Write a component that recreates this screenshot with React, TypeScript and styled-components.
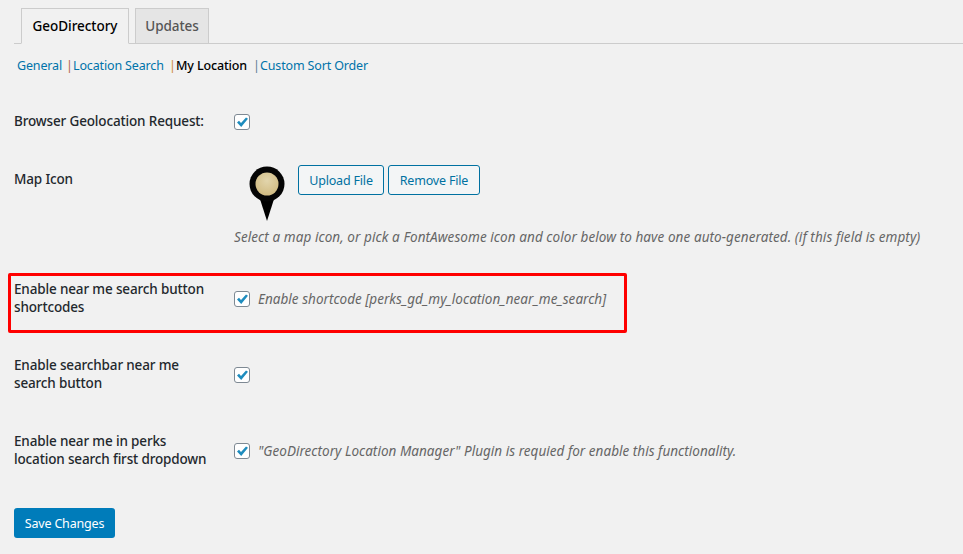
import styled, { createGlobalStyle } from 'styled-components';

const Global = createGlobalStyle`
  html, body {
    margin: 0;
    padding: 0;
    background: #f1f1f1;
  }
  body {
    font-family: "Noto Sans", "Open Sans", sans-serif;
    font-size: 13px;
    color: #23282d;
    overflow: hidden;
  }
`;

const Root = styled.div`
  width: 963px;
  height: 554px;
  overflow: hidden;
`;

const TabBar = styled.div`
  display: flex;
  gap: 6px;
  height: 35px;
  margin: 8px 0 0 14px;
  padding-left: 7px;
  border-bottom: 1px solid #ccc;
`;

const Tab = styled.div<{ $active?: boolean }>`
  box-sizing: border-box;
  height: ${(p) => (p.$active ? '36px' : '35px')};
  width: ${(p) => (p.$active ? '108px' : '74px')};
  display: flex;
  align-items: center;
  justify-content: center;
  border: 1px solid #ccc;
  border-bottom: ${(p) => (p.$active ? '1px solid #f1f1f1' : 'none')};
  background: ${(p) => (p.$active ? '#f1f1f1' : '#e5e5e5')};
  color: ${(p) => (p.$active ? '#000' : '#555')};
  font-size: 13.5px;
  font-weight: 500;
  letter-spacing: -0.05px;
`;

const SubNav = styled.div`
  display: flex;
  height: 18px;
  margin: 13px 0 0 17px;
  line-height: 18px;
  font-size: 12.5px;
  letter-spacing: -0.15px;
`;

const SubLink = styled.a<{ $current?: boolean; $width: number }>`
  width: ${(p) => p.$width}px;
  color: ${(p) => (p.$current ? '#000' : '#0073aa')};
  font-weight: ${(p) => (p.$current ? 500 : 400)};
  white-space: nowrap;
`;

const Sep = styled.span<{ $color: string }>`
  width: 7px;
  color: ${(p) => p.$color};
`;

const Form = styled.div`
  margin: 37px 0 0 14px;
`;

const Row = styled.div<{ $height: number }>`
  position: relative;
  display: grid;
  grid-template-columns: 220px 1fr;
  height: ${(p) => p.$height}px;
`;

const Label = styled.div<{ $top: number }>`
  padding-top: ${(p) => p.$top}px;
  width: 196px;
  font-weight: 500;
  font-size: 13.5px;
  line-height: 18px;
  letter-spacing: -0.15px;
  color: #23282d;
`;

const Field = styled.div<{ $top?: number }>`
  display: flex;
  align-items: center;
  gap: 8px;
  height: 16px;
  margin-top: ${(p) => p.$top ?? 0}px;
`;

const Box = styled.span`
  box-sizing: border-box;
  flex: none;
  width: 16px;
  height: 16px;
  display: flex;
  align-items: center;
  justify-content: center;
  border: 1px solid #7e8993;
  border-radius: 3px;
  background: #fff;
`;

const Hint = styled.span`
  font-style: italic;
  font-size: 13.5px;
  letter-spacing: 0.03px;
  color: #666;
  white-space: nowrap;
`;

const MapField = styled.div`
  display: flex;
  flex-direction: column;
`;

const UploadRow = styled.div`
  box-sizing: border-box;
  display: flex;
  gap: 4px;
  height: 61px;
  padding: 1px 0 0 15px;
`;

const PinWrap = styled.div`
  width: 45px;
  padding-top: 1px;
`;

const OutlineButton = styled.div<{ $width: number }>`
  box-sizing: border-box;
  width: ${(p) => p.$width}px;
  height: 30px;
  display: flex;
  align-items: center;
  justify-content: center;
  border: 1px solid #0071a1;
  border-radius: 3px;
  background: #f3f5f6;
  color: #0071a1;
  font-size: 12.5px;
  letter-spacing: -0.18px;
`;

const MapHint = styled(Hint)`
  margin-top: 3px;
  line-height: 18px;
  letter-spacing: 0.08px;
`;

const Highlight = styled.div`
  position: absolute;
  left: -6px;
  top: -1px;
  width: 619px;
  height: 60px;
  box-sizing: border-box;
  border: 3px solid #f00;
  border-radius: 2px;
  pointer-events: none;
`;

const SaveButton = styled.div`
  box-sizing: border-box;
  width: 101px;
  height: 30px;
  display: flex;
  align-items: center;
  justify-content: center;
  background: #007cba;
  border-radius: 3px;
  color: #fff;
  font-size: 12.5px;
  letter-spacing: -0.18px;
`;

const Check = () => (
  <Box>
    <svg width="14" height="14" viewBox="0 0 14 14">
      <path d="M2 7.5 L4 5.8 L6 8 L11 2.5 L13 3.8 L6.2 12 Z" fill="#1e8cbe" />
    </svg>
  </Box>
);

const Pin = () => (
  <svg width="36" height="56" viewBox="0 0 36 56">
    <defs>
      <radialGradient id="pinFill" cx="50%" cy="35%" r="60%">
        <stop offset="0%" stopColor="#e2d5ac" />
        <stop offset="100%" stopColor="#d2bd85" />
      </radialGradient>
    </defs>
    <path d="M10 30 L18 55 L26 30 Z" fill="#000" />
    <circle cx="18" cy="18" r="17.5" fill="#050505" />
    <circle cx="18" cy="18" r="11.5" fill="url(#pinFill)" />
  </svg>
);

export default function App() {
  return (
    <Root>
      <Global />
      <TabBar>
        <Tab $active>GeoDirectory</Tab>
        <Tab>Updates</Tab>
      </TabBar>
      <SubNav>
        <SubLink $width={49}>General</SubLink>
        <Sep $color="#b5654a">|</Sep>
        <SubLink $width={96}>Location Search</SubLink>
        <Sep $color="#d08a3c">|</Sep>
        <SubLink $current $width={77}>My Location</SubLink>
        <Sep $color="#5f7f95">|</Sep>
        <SubLink $width={110}>Custom Sort Order</SubLink>
      </SubNav>
      <Form>
        <Row $height={52}>
          <Label $top={0}>Browser Geolocation Request:</Label>
          <Field $top={2}><Check /></Field>
        </Row>
        <Row $height={110}>
          <Label $top={6}>Map Icon</Label>
          <MapField>
            <UploadRow>
              <PinWrap><Pin /></PinWrap>
              <OutlineButton $width={86}>Upload File</OutlineButton>
              <OutlineButton $width={92}>Remove File</OutlineButton>
            </UploadRow>
            <MapHint>Select a map icon, or pick a FontAwesome icon and color below to have one auto-generated. (if this field is empty)</MapHint>
          </MapField>
        </Row>
        <Row $height={76}>
          <Highlight />
          <Label $top={6}>Enable near me search button shortcodes</Label>
          <Field $top={17}>
            <Check />
            <Hint>Enable shortcode [perks_gd_my_location_near_me_search]</Hint>
          </Field>
        </Row>
        <Row $height={76}>
          <Label $top={6}>Enable searchbar near me search button</Label>
          <Field $top={17}><Check /></Field>
        </Row>
        <Row $height={82}>
          <Label $top={6}>Enable near me in perks location search first dropdown</Label>
          <Field $top={17}>
            <Check />
            <Hint>"GeoDirectory Location Manager" Plugin is requied for enable this functionality.</Hint>
          </Field>
        </Row>
        <SaveButton>Save Changes</SaveButton>
      </Form>
    </Root>
  );
}
